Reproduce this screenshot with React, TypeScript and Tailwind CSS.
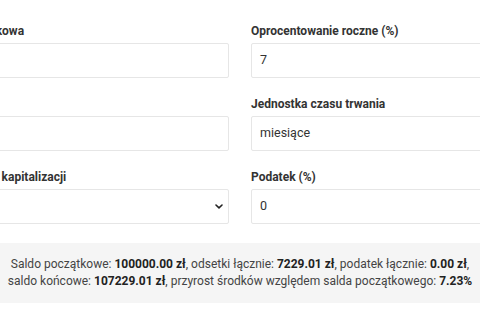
import React from 'react';

const font = { fontFamily: 'Roboto, "Noto Sans", sans-serif' };

function Chevron() {
  return (
    <svg width="8" height="5" viewBox="0 0 8 5" fill="none" className="stroke-[#222]" strokeWidth="1.6">
      <path d="M1 1l3 2.8L7 1" strokeLinecap="round" strokeLinejoin="round" />
    </svg>
  );
}

function Field({ label, value, select }: { label: string; value: string; select?: boolean }) {
  return (
    <div className="flex flex-col">
      <label className="text-[12px] leading-[18px] font-bold text-[#333] mb-[3px]">{label}</label>
      <div className="h-[35px] border border-[#e6e6e6] bg-white rounded-[2px] flex items-center justify-between pl-[8px] pr-[5px] text-[12.5px] text-[#333]">
        <span>{value}</span>
        {select && <Chevron />}
      </div>
    </div>
  );
}

export default function App() {
  return (
    <div className="w-[480px] h-[320px] overflow-hidden bg-white" style={font}>
      <div className="w-[634px] -ml-[77px] pt-[22px]">
        <div className="grid grid-cols-2 gap-x-[22px] gap-y-[17px]">
          <Field label="Kwota początkowa" value="" />
          <Field label="Oprocentowanie roczne (%)" value="7" />
          <Field label="Czas trwania" value="" />
          <Field label="Jednostka czasu trwania" value="miesiące" select />
          <Field label="Częstotliwość kapitalizacji" value="" select />
          <Field label="Podatek (%)" value="0" />
        </div>
        <div className="mt-[19px] bg-[#f5f5f5] pt-[13px] pb-[13px] text-center text-[12px] leading-[17px] text-[#444]">
          <p>
            Saldo początkowe: <b className="text-[#222]">100000.00 zł</b>, odsetki łącznie: <b className="text-[#222]">7229.01 zł</b>, podatek łącznie: <b className="text-[#222]">0.00 zł</b>,
          </p>
          <p>
            saldo końcowe: <b className="text-[#222]">107229.01 zł</b>, przyrost środków względem salda początkowego: <b className="text-[#222]">7.23%</b>
          </p>
        </div>
      </div>
    </div>
  );
}
